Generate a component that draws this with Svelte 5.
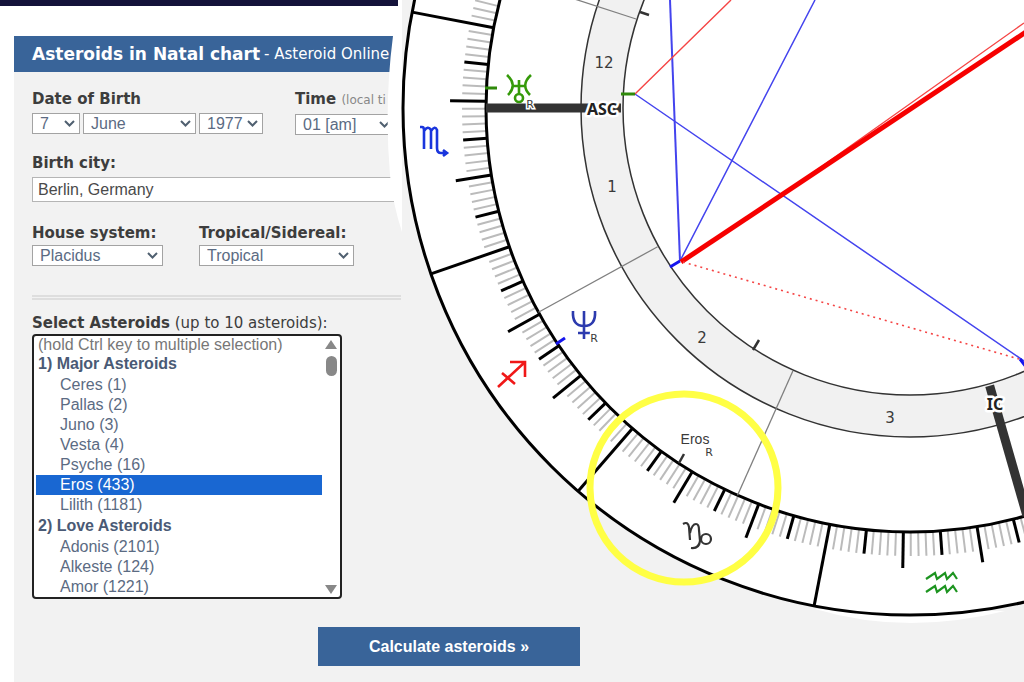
<script>
    const cx = 910;
    const cy = 108;
    const signStart = -10.9;

    const days = ['7']
    const months = ['June']
    const years = ['1977']

    const groups = [
        {
            name: '1) Major Asteroids',
            items: ['Ceres (1)', 'Pallas (2)', 'Juno (3)', 'Vesta (4)', 'Psyche (16)', 'Eros (433)', 'Lilith (1181)']
        },
        {
            name: '2) Love Asteroids',
            items: ['Adonis (2101)', 'Alkeste (124)', 'Amor (1221)']
        }
    ]

    let selected = $state('Eros (433)');
    let city = $state('Berlin, Germany');

    // angle in degrees, counted from the ascendant (left) towards the IC (bottom)
    function line(angle, from, to) {
        const a = angle * Math.PI / 180;
        return {
            x1: cx - from * Math.cos(a),
            y1: cy + from * Math.sin(a),
            x2: cx - to * Math.cos(a),
            y2: cy + to * Math.sin(a)
        }
    }

    const ticks = [];
    for (let i = -10; i < 130; i++) {
        let kind = 'one'
        let to = 448
        if (i % 30 === 0) {
            kind = 'sign'
            to = 507
        } else if (i % 10 === 0) {
            kind = 'ten'
            to = 460
        } else if (i % 5 === 0) {
            kind = 'five'
        }
        ticks.push({ kind, ...line(signStart + i, 424, to) })
    }

    const cusps = [-18, 28.8, 66].map(a => line(a, 288, 424))
    const ic = line(106, 289, 424)
</script>

<div class="strip"></div>
<main>
    <section class="panel">
        <header>
            <h1>Asteroids in Natal chart</h1>
            <span>- Asteroid Online</span>
        </header>

        <form onsubmit={(e) => e.preventDefault()}>
            <div class="fields birth">
                <div class="field">
                    <label for="day">Date of Birth</label>
                    <div class="selects">
                        <select id="day" class="day">
                            {#each days as d}<option>{d}</option>{/each}
                        </select>
                        <select class="month" aria-label="Month">
                            {#each months as m}<option>{m}</option>{/each}
                        </select>
                        <select class="year" aria-label="Year">
                            {#each years as y}<option>{y}</option>{/each}
                        </select>
                    </div>
                </div>
                <div class="field">
                    <label for="hour">Time <small>(local ti</small></label>
                    <select id="hour" class="hour"><option>01 [am]</option></select>
                </div>
            </div>

            <div class="field city">
                <label for="city">Birth city:</label>
                <input id="city" type="text" bind:value={city}>
            </div>

            <div class="fields systems">
                <div class="field">
                    <label for="house">House system:</label>
                    <select id="house" class="house"><option>Placidus</option></select>
                </div>
                <div class="field">
                    <label for="zodiac">Tropical/Sidereal:</label>
                    <select id="zodiac" class="zodiac"><option>Tropical</option></select>
                </div>
            </div>

            <hr>

            <span class="list_label" id="list_label"><b>Select Asteroids</b> (up to 10 asteroids):</span>
            <div class="list_wrap">
                <div class="list" role="listbox" aria-labelledby="list_label">
                    <p>(hold Ctrl key to multiple selection)</p>
                    {#each groups as group}
                        <h2>{group.name}</h2>
                        {#each group.items as item}
                            <button type="button" role="option" aria-selected={selected === item} class:selected={selected === item} onclick={() => selected = item}>{item}</button>
                        {/each}
                    {/each}
                </div>
                <div class="scrollbar">
                    <i class="up"></i>
                    <i class="thumb"></i>
                    <i class="down"></i>
                </div>
            </div>

            <button class="submit">Calculate asteroids »</button>
        </form>
    </section>
</main>

<svg class="chart" role="img" aria-label="Natal chart">
    <rect class="backdrop" x="401" y="0" width="100%" height="240" />
    <path class="halo" d="M399 0L393 36Q384 105 390 175Q393 205 402 232V0ZM815 609Q905 636 1005 611Z" />
    <circle class="outer" {cx} {cy} r="507" />
    <circle class="band" {cx} {cy} r="308" />
    <circle class="ring" {cx} {cy} r="329" />
    <circle class="ring" {cx} {cy} r="287" />

    {#each ticks as t}
        <line class={t.kind} x1={t.x1} y1={t.y1} x2={t.x2} y2={t.y2} />
    {/each}
    <circle class="zodiac_ring" {cx} {cy} r="424" />

    {#each cusps as c}
        <line class="cusp" {...c} />
    {/each}
    <line class="axis" x1="486" y1="108" x2="621" y2="108" />
    <line class="axis" {...ic} />

    <g class="blue">
        <path class="double" d="M670 0L680 261" />
        <path d="M815 0L680 261M635 94L1024 361" />
        <path class="mark" d="M670 267L680 261M1020 359L1026 367" />
    </g>
    <g class="red">
        <path d="M635 94L731 0M770 203L1024 23" />
        <path class="thick" d="M681 262L1026 32" />
        <path class="dots" d="M683 262L1019 359" />
    </g>
    <path class="green_mark" d="M485 88H497M621 94H635" />
    <path class="blue_mark" d="M556 344L565 338" />
    <path class="dark_mark" d="M640 12L649 15M759 340L753 350M684 454L679 463" />

    <!-- uranus -->
    <g class="glyph uranus">
        <path d="M507 75Q518 85 508 95M531 75Q520 85 530 95M513 86H525M519 80V93" />
        <circle cx="519" cy="98" r="4" />
    </g>
    <!-- scorpio -->
    <path class="glyph scorpio" d="M420 127H422Q424 127 424 130V149M424 131Q428 125 431 130V149M431 131Q435 125 437 130V148Q437 153 441 153H446M443 150L447 153L443 156" />
    <!-- neptune -->
    <path class="glyph neptune" d="M573 311Q572 326 584 326Q596 326 595 311M584 311V339M578 333H590" />
    <!-- sagittarius -->
    <path class="glyph sagittarius" d="M498 387L525 362M510 362H525V377M502 373L515 384" />
    <!-- capricorn -->
    <g class="glyph capricorn">
        <path d="M683 524Q688 521 689 527L690 540M690 533Q692 524 696 524Q699 524 699 530L700 541Q699 549 691 548M700 541Q700 538 702 537" />
        <circle cx="706" cy="539" r="5" />
    </g>
    <!-- aquarius -->
    <path class="glyph aquarius" d="M926 579L935 573L937 579L945 573L947 579L953 573L957 579M926 592L935 586L937 592L945 586L947 592L953 586L957 592" />

    <g class="labels">
        <text x="604" y="68">12</text>
        <text x="612" y="192">1</text>
        <text x="702" y="343">2</text>
        <text x="890" y="423">3</text>
        <text class="retro" x="530" y="108">R</text>
        <text class="retro" x="594" y="342">R</text>
        <text class="retro" x="709" y="456">R</text>
        <text class="eros" x="695" y="444">Eros</text>
        <text class="angle" x="602" y="115">ASC</text>
        <text class="angle" x="995" y="410">IC</text>
    </g>

    <circle class="highlight" cx="684" cy="488" r="94" />
</svg>

<style>
    :global(body) {
        background-color: white;
        font-family: "DejaVu Sans", Verdana, sans-serif;
        color: #3d3d3d;
    }

    .strip {
        width: 398px;
        height: 6px;
        background-color: #14123a;
    }

    main {
        padding: 30px 0 0 14px;
    }

    .panel {
        background-color: #f2f2f2;
    }

    header {
        display: flex;
        align-items: center;
        gap: 4px;
        height: 36px;
        padding-left: 18px;

        background-color: #396499;
        color: white;
        font-size: 15px;
    }

    h1 {
        margin: 0;
        font-size: 17px;
    }

    form {
        display: flex;
        flex-direction: column;
        padding: 18px 18px 16px;
    }

    .fields {
        display: flex;
    }

    .birth {
        gap: 32px;
    }

    .systems {
        gap: 36px;
        margin-top: 22px;
    }

    .field {
        display: flex;
        flex-direction: column;
        gap: 5px;
    }

    .systems .field {
        gap: 3px;
    }

    .city {
        margin-top: 19px;
    }

    label {
        font-size: 15px;
        font-weight: bold;
        line-height: 18px;
    }

    small {
        font-size: 12px;
        font-weight: normal;
        color: #888;
    }

    .selects {
        display: flex;
        gap: 3px;
    }

    select {
        height: 21px;
        padding: 0 4px 0 7px;
        box-sizing: border-box;

        appearance: none;
        border: 1px solid #a3a3a3;
        border-radius: 0;
        background: white url("data:image/svg+xml,%3Csvg xmlns='http://www.w3.org/2000/svg' width='11' height='7'%3E%3Cpath d='M1 1l4.500 4.500L10 1' fill='none' stroke='%23506070' stroke-width='2'/%3E%3C/svg%3E") no-repeat right 4px center;

        color: #5b6b83;
        font-family: "Liberation Sans", Arial, sans-serif;
        font-size: 16px;
    }

    .day {
        width: 48px;
    }

    .month {
        width: 113px;
    }

    .year {
        width: 64px;
    }

    .hour {
        width: 100px;
    }

    .house {
        width: 131px;
    }

    .zodiac {
        width: 155px;
    }

    input {
        height: 25px;
        width: 100%;
        padding: 0 5px;
        box-sizing: border-box;

        border: 1px solid #b5b5b5;
        color: #4a4a4a;
        font-family: "Liberation Sans", Arial, sans-serif;
        font-size: 16px;
    }

    hr {
        width: 369px;
        height: 1px;
        margin: 29px 0 14px;
        border: solid #dedede;
        border-width: 2px 0;
    }

    .list_label {
        font-size: 15px;
        line-height: 18px;
    }

    .list_wrap {
        display: flex;
        width: 310px;
        height: 265px;
        margin-top: 2px;
        box-sizing: border-box;

        border: 2px solid #222;
        border-radius: 4px;
        background-color: white;
    }

    .list {
        flex: 1;
        padding-left: 2px;
        overflow: hidden;

        color: #5b6b83;
        font-family: "Liberation Sans", Arial, sans-serif;
        font-size: 16px;
        line-height: 20px;
    }

    .list p {
        margin: 0 0 0 2px;
        line-height: 17px;
        color: #777;
    }

    .list h2 {
        margin: 0 0 0 2px;
        font-size: 16px;
        line-height: 22px;
        color: #4a5a75;
    }

    .list button {
        display: block;
        width: 100%;
        padding: 0 0 0 24px;

        border: none;
        background-color: transparent;
        color: inherit;
        font: inherit;
        text-align: left;
    }

    .list button.selected {
        background-color: #1967d2;
        color: white;
    }

    .scrollbar {
        display: flex;
        flex-direction: column;
        align-items: center;
        width: 18px;
        padding: 4px 0 3px;
        box-sizing: border-box;
    }

    .up, .down {
        border: 6px solid transparent;
    }

    .up {
        border-top: none;
        border-bottom: 9px solid #888;
    }

    .down {
        margin-top: auto;
        border-bottom: none;
        border-top: 9px solid #888;
    }

    .thumb {
        width: 11px;
        height: 20px;
        margin-top: 7px;
        border-radius: 6px;
        background-color: #888;
    }

    .submit {
        width: 262px;
        height: 39px;
        margin: 28px 0 0 286px;

        border: none;
        background-color: #396499;
        color: white;
        font-family: "Liberation Sans", Arial, sans-serif;
        font-size: 16px;
        font-weight: bold;
    }

    .chart {
        position: absolute;
        top: 0;
        left: 0;
        width: 100%;
        height: 660px;
        pointer-events: none;
        fill: none;
    }

    .backdrop {
        fill: #f2f2f2;
    }

    .halo {
        fill: white;
    }

    .outer {
        fill: white;
        stroke: black;
        stroke-width: 3;
    }

    .band {
        stroke: #f1f1f1;
        stroke-width: 42;
    }

    .ring {
        stroke: #333;
        stroke-width: 1.5;
    }

    .zodiac_ring {
        stroke: black;
        stroke-width: 3;
    }

    .one {
        stroke: #bbb;
        stroke-width: 2;
    }

    .five, .ten, .sign {
        stroke: black;
        stroke-width: 3;
    }

    .cusp {
        stroke: #808080;
        stroke-width: 1.3;
    }

    .axis {
        stroke: #333;
        stroke-width: 9;
    }

    .blue {
        stroke: #4444ee;
        stroke-width: 1.5;
    }

    .blue .double {
        stroke-width: 2;
    }

    .blue .mark, .blue_mark {
        stroke: #1515ee;
        stroke-width: 3;
    }

    .red {
        stroke: #f54545;
        stroke-width: 1.4;
    }

    .red .thick {
        stroke: #f60000;
        stroke-width: 5;
    }

    .red .dots {
        stroke-width: 1.6;
        stroke-dasharray: 2 4;
    }

    .green_mark {
        stroke: #2f8a0a;
        stroke-width: 3;
    }

    .dark_mark {
        stroke: #333;
        stroke-width: 2.5;
    }

    .glyph {
        stroke-width: 2.6;
    }

    .uranus {
        stroke: #359a0a;
    }

    .scorpio {
        stroke: #1a35dd;
    }

    .neptune {
        stroke: #2c3aae;
    }

    .sagittarius {
        stroke: #f01818;
    }

    .capricorn {
        stroke: #333;
        stroke-width: 2.2;
    }

    .aquarius {
        stroke: #1d9420;
        stroke-width: 2.2;
    }

    .labels {
        fill: #3a3a3a;
        font-size: 15px;
        text-anchor: middle;
    }

    .labels .retro {
        font-size: 11px;
        stroke: white;
        stroke-width: 3;
        paint-order: stroke;
    }

    .labels .eros {
        font-family: "Liberation Sans", Arial, sans-serif;
        font-size: 14px;
    }

    .labels .angle {
        font-family: "Noto Sans", sans-serif;
        font-size: 16px;
        font-weight: bold;
        fill: #222;
        stroke: white;
        stroke-width: 5;
        stroke-linejoin: round;
        paint-order: stroke;
    }

    .highlight {
        stroke: #ffff45;
        stroke-width: 7;
    }
</style>
